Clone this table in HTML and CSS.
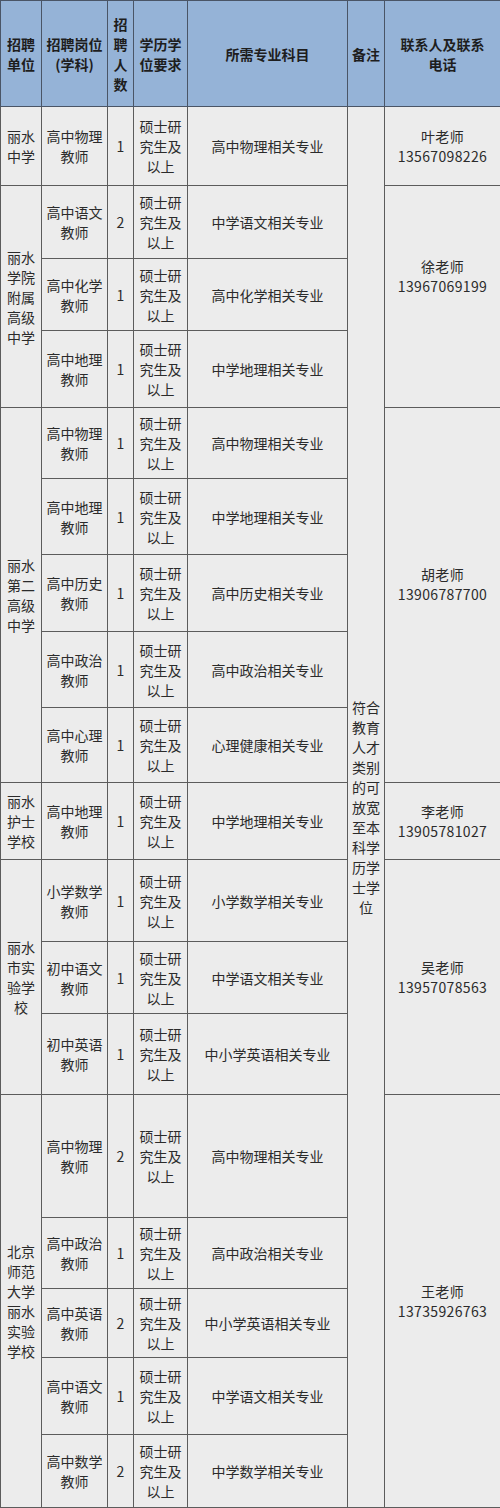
FILE: index.html
```html
<!DOCTYPE html>
<html lang="zh-CN">
<head>
<meta charset="utf-8">
<title>招聘计划</title>
<link rel="stylesheet" href="styles.css">
</head>
<body>
<table class="plan">
  <colgroup>
    <col class="c-unit">
    <col class="c-post">
    <col class="c-num">
    <col class="c-edu">
    <col class="c-major">
    <col class="c-note">
    <col class="c-contact">
  </colgroup>
  <thead>
    <tr>
      <th>招聘<br>单位</th>
      <th>招聘岗位<br>(学科)</th>
      <th>招<br>聘<br>人<br>数</th>
      <th>学历学<br>位要求</th>
      <th>所需专业科目</th>
      <th>备注</th>
      <th>联系人及联系<br>电话</th>
    </tr>
  </thead>
  <tbody>
    <tr>
      <td>丽水<br>中学</td>
      <td>高中物理<br>教师</td>
      <td>1</td>
      <td>硕士研<br>究生及<br>以上</td>
      <td>高中物理相关专业</td>
      <td class="note" rowspan="18">符合教育人才类别的可放宽至本科学历学士学位</td>
      <td class="contact">叶老师<br>13567098226</td>
    </tr>
    <tr>
      <td rowspan="3">丽水<br>学院<br>附属<br>高级<br>中学</td>
      <td>高中语文<br>教师</td>
      <td>2</td>
      <td>硕士研<br>究生及<br>以上</td>
      <td>中学语文相关专业</td>
      <td rowspan="3" class="contact lift2">徐老师<br>13967069199</td>
    </tr>
    <tr>
      <td>高中化学<br>教师</td>
      <td>1</td>
      <td>硕士研<br>究生及<br>以上</td>
      <td>高中化学相关专业</td>
    </tr>
    <tr>
      <td>高中地理<br>教师</td>
      <td>1</td>
      <td>硕士研<br>究生及<br>以上</td>
      <td>中学地理相关专业</td>
    </tr>
    <tr>
      <td rowspan="5">丽水<br>第二<br>高级<br>中学</td>
      <td>高中物理<br>教师</td>
      <td>1</td>
      <td>硕士研<br>究生及<br>以上</td>
      <td>高中物理相关专业</td>
      <td rowspan="5" class="contact lift1">胡老师<br>13906787700</td>
    </tr>
    <tr>
      <td>高中地理<br>教师</td>
      <td>1</td>
      <td>硕士研<br>究生及<br>以上</td>
      <td>中学地理相关专业</td>
    </tr>
    <tr>
      <td>高中历史<br>教师</td>
      <td>1</td>
      <td>硕士研<br>究生及<br>以上</td>
      <td>高中历史相关专业</td>
    </tr>
    <tr>
      <td>高中政治<br>教师</td>
      <td>1</td>
      <td>硕士研<br>究生及<br>以上</td>
      <td>高中政治相关专业</td>
    </tr>
    <tr>
      <td>高中心理<br>教师</td>
      <td>1</td>
      <td>硕士研<br>究生及<br>以上</td>
      <td>心理健康相关专业</td>
    </tr>
    <tr>
      <td>丽水<br>护士<br>学校</td>
      <td>高中地理<br>教师</td>
      <td>1</td>
      <td>硕士研<br>究生及<br>以上</td>
      <td>中学地理相关专业</td>
      <td class="contact">李老师<br>13905781027</td>
    </tr>
    <tr>
      <td rowspan="3">丽水<br>市实<br>验学<br>校</td>
      <td>小学数学<br>教师</td>
      <td>1</td>
      <td>硕士研<br>究生及<br>以上</td>
      <td>小学数学相关专业</td>
      <td rowspan="3" class="contact">吴老师<br>13957078563</td>
    </tr>
    <tr>
      <td>初中语文<br>教师</td>
      <td>1</td>
      <td>硕士研<br>究生及<br>以上</td>
      <td>中学语文相关专业</td>
    </tr>
    <tr>
      <td>初中英语<br>教师</td>
      <td>1</td>
      <td>硕士研<br>究生及<br>以上</td>
      <td>中小学英语相关专业</td>
    </tr>
    <tr>
      <td rowspan="5">北京<br>师范<br>大学<br>丽水<br>实验<br>学校</td>
      <td>高中物理<br>教师</td>
      <td>2</td>
      <td>硕士研<br>究生及<br>以上</td>
      <td>高中物理相关专业</td>
      <td rowspan="5" class="contact">王老师<br>13735926763</td>
    </tr>
    <tr>
      <td>高中政治<br>教师</td>
      <td>1</td>
      <td>硕士研<br>究生及<br>以上</td>
      <td>高中政治相关专业</td>
    </tr>
    <tr>
      <td>高中英语<br>教师</td>
      <td>2</td>
      <td>硕士研<br>究生及<br>以上</td>
      <td>中小学英语相关专业</td>
    </tr>
    <tr>
      <td>高中语文<br>教师</td>
      <td>1</td>
      <td>硕士研<br>究生及<br>以上</td>
      <td>中学语文相关专业</td>
    </tr>
    <tr>
      <td>高中数学<br>教师</td>
      <td>2</td>
      <td>硕士研<br>究生及<br>以上</td>
      <td>中学数学相关专业</td>
    </tr>
  </tbody>
</table>
</body>
</html>
```

FILE: styles.css
```css
html, body {
  margin: 0;
  padding: 0;
  background: #ececec;
}

.plan {
  width: 500px;
  table-layout: fixed;
  border-collapse: collapse;
  font-family: "Noto Sans CJK SC", "Noto Sans", sans-serif;
  font-size: 14px;
  line-height: 20px;
  color: #2b2b2b;
  background: #ececec;
}

.c-unit { width: 41px; }
.c-post { width: 66px; }
.c-num { width: 26px; }
.c-edu { width: 54px; }
.c-major { width: 160px; }
.c-note { width: 37px; }
.c-contact { width: 116px; }

.plan th,
.plan td {
  border: 1px solid #5c5c5c;
  padding: 0 2px;
  text-align: center;
  vertical-align: middle;
  overflow: hidden;
}

.plan th {
  background: #95b3d7;
  color: #1e1e1e;
  font-weight: 700;
  border-color: #4a5566;
}

.plan td.note {
  padding: 0 4px;
  word-break: break-all;
}

.plan td.contact {
  letter-spacing: 0.35px;
}

.plan td.lift2 { padding-bottom: 42px; }
.plan td.lift1 { padding-bottom: 22px; }

.plan thead tr { height: 106px; }
.plan tbody tr:nth-child(1) { height: 79px; }
.plan tbody tr:nth-child(2) { height: 73px; }
.plan tbody tr:nth-child(3) { height: 72px; }
.plan tbody tr:nth-child(4) { height: 77px; }
.plan tbody tr:nth-child(5) { height: 71px; }
.plan tbody tr:nth-child(6) { height: 76px; }
.plan tbody tr:nth-child(7) { height: 77px; }
.plan tbody tr:nth-child(8) { height: 76px; }
.plan tbody tr:nth-child(9) { height: 75px; }
.plan tbody tr:nth-child(10) { height: 77px; }
.plan tbody tr:nth-child(11) { height: 82px; }
.plan tbody tr:nth-child(12) { height: 72px; }
.plan tbody tr:nth-child(13) { height: 81px; }
.plan tbody tr:nth-child(14) { height: 123px; }
.plan tbody tr:nth-child(15) { height: 71px; }
.plan tbody tr:nth-child(16) { height: 69px; }
.plan tbody tr:nth-child(17) { height: 77px; }
.plan tbody tr:nth-child(18) { height: 73px; }
```
